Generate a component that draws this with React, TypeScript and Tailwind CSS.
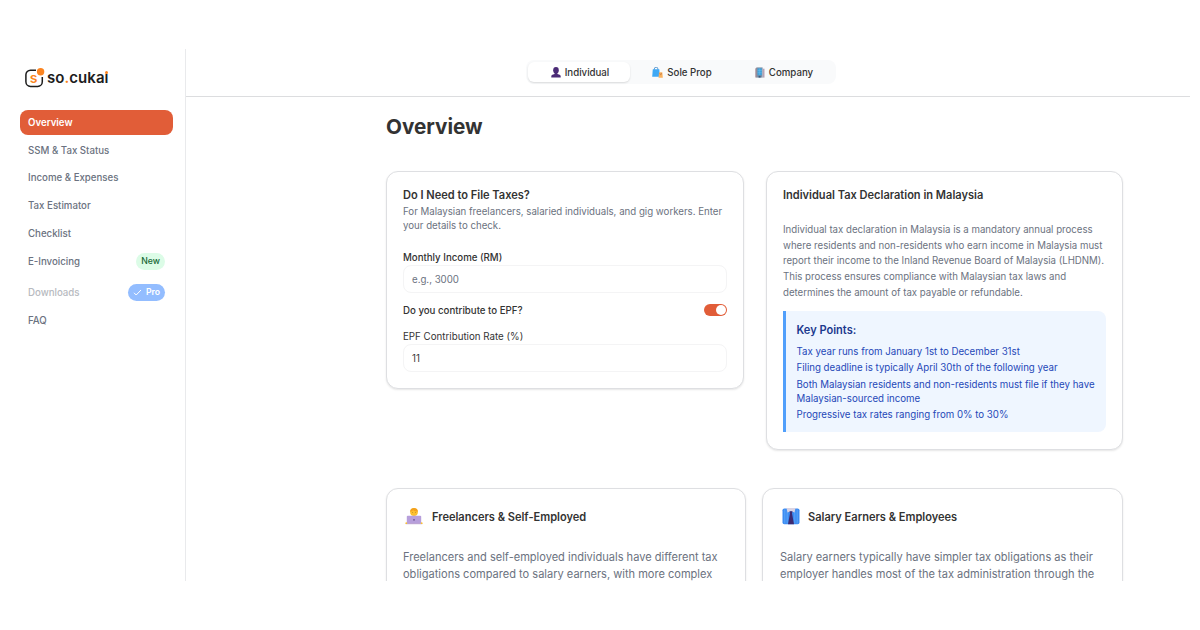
import type { ReactNode } from "react";

const line = "block whitespace-nowrap";

function NavItem({ label, h, className = "", children }: { label: string; h: string; className?: string; children?: ReactNode }) {
  return (
    <a className={`flex ${h} items-center justify-between px-2 text-[9.69px] font-medium text-[#6b7280] ${className}`}>
      <span className="pt-[2px]">{label}</span>
      {children}
    </a>
  );
}

function Logo() {
  return (
    <div className="flex h-5 items-center gap-[2px]">
      <svg width="20" height="20" viewBox="0 0 20 20" fill="none">
        <path d="M11 2.200H5.500A4.600 4.600 0 0 0 .9 6.800v7a4.600 4.600 0 0 0 4.600 4.600H12.700a4.600 4.600 0 0 0 4.600-4.600V9" stroke="#1c1c1c" strokeWidth="1.500" />
        <circle cx="15.600" cy="3.700" r="3.700" fill="#fb8420" />
        <text x="4.700" y="14.700" fontFamily="Inter, sans-serif" fontSize="14" fontWeight="600" fill="#fb8420">s</text>
      </svg>
      <span className="relative font-['Inter',sans-serif] text-[15px] font-semibold tracking-[0.05px] text-[#1c1c1c]">
        so<span className="text-[#fb8420]">.</span>cukaı
        <span className="absolute right-[0.5px] top-[4px] h-[3px] w-[3px] rounded-full bg-[#fb8420]" />
      </span>
    </div>
  );
}

function PersonIcon() {
  return (
    <svg width="10" height="11" viewBox="0 0 10 11" fill="#4b2b76">
      <ellipse cx="5" cy="3.300" rx="2.800" ry="3.200" />
      <path d="M3.600 5h2.800v2l2.200.8c.8.3 1.100 1 1.100 2V10.500H.3V9.800c0-1 .3-1.700 1.100-2l2.200-.8z" />
    </svg>
  );
}

function BagsIcon() {
  return (
    <svg width="11" height="11" viewBox="0 0 11 11">
      <path d="M2.300 3V2a1.800 1.800 0 0 1 3.600 0v1" fill="none" stroke="#3f86c8" strokeWidth=".8" />
      <path d="M.8 2.300h6.500l.6 7.400H.2z" fill="#3fa9f5" />
      <path d="M7 5.300h3.300l.5 5.400H6.600z" fill="#f9b25f" />
      <path d="M7.900 6v.8a.8.8 0 0 0 1.600 0V6" fill="none" stroke="#b0643a" strokeWidth=".5" />
    </svg>
  );
}

function OfficeIcon() {
  return (
    <svg width="10" height="11" viewBox="0 0 10 11">
      <path d="M.3 1.500 2 .4v10.200H.3z" fill="#a58b94" />
      <path d="M1.600.4h6v10.200h-6z" fill="#7c90a8" />
      <path d="M7.600 1.700h1.900v8.900H7.600z" fill="#b6a3b4" />
      <path d="M2.600 1.400h4.200v6.800H2.600z" fill="#3fa4dd" />
      <path d="M4.600 1.400v6.800M2.600 3.500h4.200M2.600 5.700h4.200" stroke="#7fc3ea" strokeWidth=".4" />
      <path d="M3.600 8.800h2v1.800h-2z" fill="#3c5d7e" />
    </svg>
  );
}

function FreelancerIcon() {
  return (
    <svg width="18" height="18" viewBox="0 0 18 18">
      <path d="M3.500 16c0-5 2-7 5.500-7s5.500 2 5.500 7z" fill="#d2b29a" />
      <circle cx="9" cy="5" r="3.900" fill="#fcc02e" />
      <path d="M5.200 4.700c0-5 7.600-5 7.600 0C11 4.700 9 4.200 8 3 7.600 4 6.500 4.600 5.200 4.700z" fill="#f2a01e" />
      <circle cx="7.600" cy="5.600" r=".45" fill="#8b6424" />
      <circle cx="10.400" cy="5.600" r=".45" fill="#8b6424" />
      <rect x="1.800" y="8.800" width="14.400" height="8" rx="1" fill="#b79fdb" />
      <circle cx="9" cy="12.800" r=".9" fill="#6d548f" />
      <path d="M.8 16.200h16.400v1H.8z" fill="#b9a0cf" />
      <circle cx="1.300" cy="16.200" r=".9" fill="#fcc02e" />
      <circle cx="16.700" cy="16.200" r=".9" fill="#fcc02e" />
    </svg>
  );
}

function ShirtIcon() {
  return (
    <svg width="18" height="18" viewBox="0 0 18 18">
      <rect x=".5" y="1.500" width="17" height="15.700" rx="1.800" fill="#3c8bf2" />
      <path d="M2.800 2.500v14M5.200 2.500v14M12.800 2.500v14M15.200 2.500v14" stroke="#65b0fb" strokeWidth=".7" />
      <path d="M4.500 1h9l-1 4.500L9 4.300 5.500 5.500z" fill="#d9d3e4" />
      <path d="M7.500 4.300h3L10 6.300l2 10.900H6l2-10.900z" fill="#3d2a70" />
    </svg>
  );
}

function Tab({ icon, label, active }: { icon: ReactNode; label: string; active?: boolean }) {
  return (
    <div className={`flex h-[20px] w-[102px] items-center justify-center gap-[4px] rounded-md pl-[2px] text-[9.69px] font-medium text-[#333] ${active ? "bg-white shadow-[0_1px_2px_rgba(0,0,0,0.13)]" : ""}`}>
      {icon}
      <span className="pt-[2px]">{label}</span>
    </div>
  );
}

const card = "border border-[#dedfe2] bg-white shadow-[0_1px_2px_rgba(0,0,0,0.10)]";
const input = "flex h-7 items-center rounded-lg border border-[#f4f4f5] px-2 pt-[2px] text-[9.69px]";
const title = "text-[11.05px] font-semibold";

export default function App() {
  return (
    <div className="h-[630px] w-[1200px] overflow-hidden bg-white pt-[49px] font-['Inter',sans-serif] text-[#333]">
      <div className="flex h-[532px] w-[1190px] overflow-hidden">
        <aside className="w-[186px] shrink-0 border-r border-[#e9eaec] pl-5 pr-3 pt-[19px]">
          <div className="pl-[5px]"><Logo /></div>
          <nav className="mt-[22px] flex flex-col">
            <NavItem label="Overview" h="h-[25px]" className="rounded-lg bg-[#e15d38] !font-semibold !text-white" />
            <NavItem label="SSM & Tax Status" h="h-[30px]" />
            <NavItem label="Income & Expenses" h="h-[25px]" />
            <NavItem label="Tax Estimator" h="h-[30px]" />
            <NavItem label="Checklist" h="h-[26px]" />
            <NavItem label="E-Invoicing" h="h-[31px]">
              <span className="flex h-[17px] w-[29px] items-center justify-center rounded-full bg-[#dcfce7] text-[8.700px] text-[#166534]">New</span>
            </NavItem>
            <NavItem label="Downloads" h="h-[31px]" className="!text-[#b7bac0]">
              <span className="flex h-[17px] w-[37px] items-center justify-center gap-[4px] rounded-full bg-[#93bdff] text-[8.700px] font-semibold text-white">
                <svg width="9" height="7" viewBox="0 0 9 7" fill="none" stroke="white" strokeWidth="1"><path d="M1 3.800 3.200 6 8 1" /></svg>
                Pro
              </span>
            </NavItem>
            <NavItem label="FAQ" h="h-[25px]" />
          </nav>
        </aside>

        <div className="flex min-w-0 flex-1 flex-col">
          <header className="flex h-12 shrink-0 border-b border-[#dcdddf] pl-[340px] pt-[11px]">
            <div className="flex h-6 w-[310px] items-center rounded-lg bg-[#f9fafb] px-[2px]">
              <Tab icon={<PersonIcon />} label="Individual" active />
              <Tab icon={<BagsIcon />} label="Sole Prop" />
              <Tab icon={<OfficeIcon />} label="Company" />
            </div>
          </header>

          <main className="pl-[200px] pt-[16px]">
            <h1 className="h-7 text-[20.700px] font-bold leading-7">Overview</h1>
            <div className="mt-[30px] flex items-start gap-[22px]">
              <section className={`${card} h-[218px] w-[358px] rounded-xl px-4 pt-[15px]`}>
                <h2 className={`${title} leading-4`}>Do I Need to File Taxes?</h2>
                <p className="mt-[2px] text-[9.69px] leading-[14px] text-[#6b7280]">
                  <span className={line}>For Malaysian freelancers, salaried individuals, and gig workers. Enter</span>
                  <span className={line}>your details to check.</span>
                </p>
                <div className="pt-[17px] text-[9.69px] font-medium leading-4">Monthly Income (RM)</div>
                <div className={`${input} -mt-px text-[#6b7280]`}>e.g., 3000</div>
                <div className="mt-[10px] flex h-[14px] items-center justify-between text-[9.69px] font-medium">
                  <span className="pt-[2px]">Do you contribute to EPF?</span>
                  <span className="flex h-3 w-[23px] items-center justify-end rounded-full bg-[#e15d38] p-px">
                    <span className="h-[10px] w-[10px] rounded-full bg-white" />
                  </span>
                </div>
                <div className="pt-[12px] text-[9.75px] leading-4">EPF Contribution Rate (%)</div>
                <div className={`${input} -mt-px`}>11</div>
              </section>

              <section className={`${card} h-[279px] w-[357px] rounded-xl px-4 pt-[15px]`}>
                <h2 className={`${title} leading-4`}>Individual Tax Declaration in Malaysia</h2>
                <p className="pt-[18.800px] text-[9.67px] leading-[15.700px] text-[#6b7280]">
                  <span className={line}>Individual tax declaration in Malaysia is a mandatory annual process</span>
                  <span className={line}>where residents and non-residents who earn income in Malaysia must</span>
                  <span className={line}>report their income to the Inland Revenue Board of Malaysia (LHDNM).</span>
                  <span className={line}>This process ensures compliance with Malaysian tax laws and</span>
                  <span className={line}>determines the amount of tax payable or refundable.</span>
                </p>
                <div className="mt-[10.200px] h-[121px] w-[323px] rounded-r-lg border-l-[3px] border-[#519ffb] bg-[#eff6ff] pl-[10.500px] pt-[11px] text-[9.69px] leading-[14px] text-[#2548b8]">
                  <h3 className={`${title} leading-4 text-[#1c398e]`}>Key Points:</h3>
                  <ul className="mt-[7px] flex flex-col gap-[2.600px]">
                    <li className={line}>Tax year runs from January 1st to December 31st</li>
                    <li className={line}>Filing deadline is typically April 30th of the following year</li>
                    <li className="whitespace-nowrap">
                      Both Malaysian residents and non-residents must file if they have
                      <br />
                      Malaysian-sourced income
                    </li>
                    <li className={line}>Progressive tax rates ranging from 0% to 30%</li>
                  </ul>
                </div>
              </section>
            </div>

            <div className="mt-[38px] flex gap-4">
              <section className={`${card} h-[200px] w-[360px] rounded-xl px-4 pt-[18px]`}>
                <div className="flex h-[18px] items-center gap-[9px] pl-[2px]">
                  <FreelancerIcon />
                  <h2 className={`${title} pt-[2px]`}>Freelancers &amp; Self-Employed</h2>
                </div>
                <p className="mt-[24px] text-[11.06px] leading-[16.600px] text-[#6b7280]">
                  <span className={line}>Freelancers and self-employed individuals have different tax</span>
                  <span className={line}>obligations compared to salary earners, with more complex</span>
                </p>
              </section>
              <section className={`${card} h-[200px] w-[361px] rounded-xl pl-[17px] pr-4 pt-[18px]`}>
                <div className="flex h-[18px] items-center gap-[8px] pl-[2px]">
                  <ShirtIcon />
                  <h2 className={`${title} pt-[2px]`}>Salary Earners &amp; Employees</h2>
                </div>
                <p className="mt-[24px] text-[11.06px] leading-[16.600px] text-[#6b7280]">
                  <span className={line}>Salary earners typically have simpler tax obligations as their</span>
                  <span className={line}>employer handles most of the tax administration through the</span>
                </p>
              </section>
            </div>
          </main>
        </div>
      </div>
    </div>
  );
}
